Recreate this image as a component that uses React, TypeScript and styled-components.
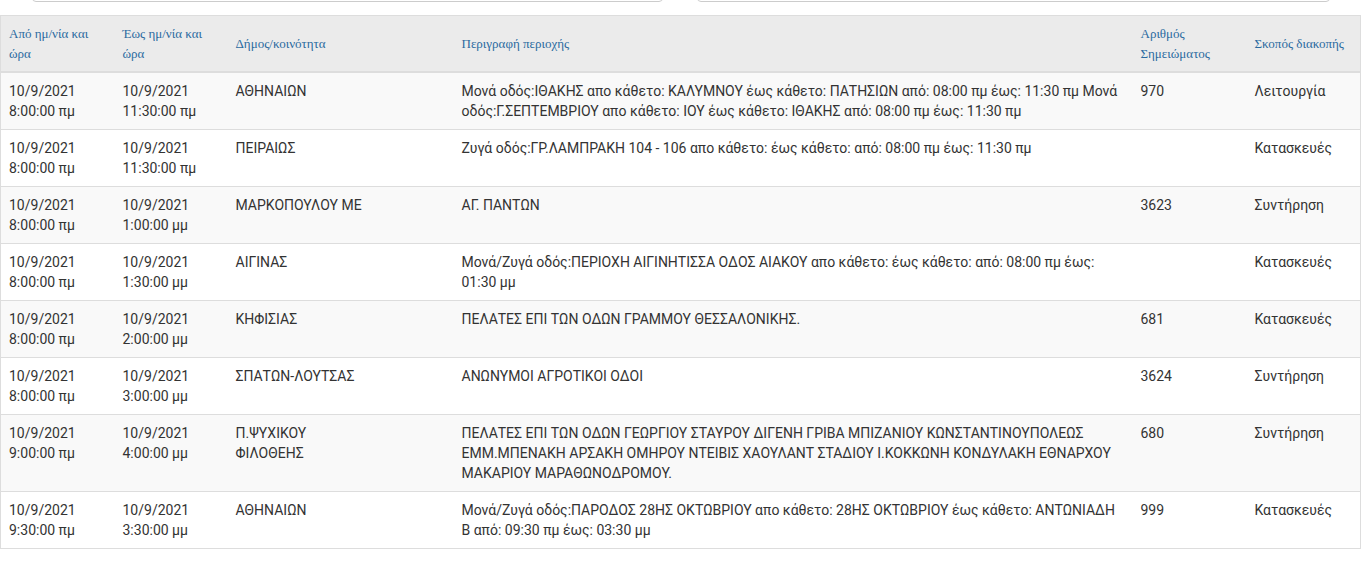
import styled, { createGlobalStyle } from "styled-components"

const GlobalStyle = createGlobalStyle`
    html, body {
        margin: 0;
        padding: 0;
        background: #fff;
    }
    body {
        font-family: Roboto, "Noto Sans", "Liberation Sans", sans-serif;
        font-size: 14px;
        color: #333;
    }
`

interface Outage {
    from: [string, string];
    to: [string, string];
    area: string;
    description: string;
    note: string;
    reason: string;
}

const outages: Outage[] = [
    {
        from: ["10/9/2021", "8:00:00 πμ"],
        to: ["10/9/2021", "11:30:00 πμ"],
        area: "ΑΘΗΝΑΙΩΝ",
        description: "Μονά οδός:ΙΘΑΚΗΣ απο κάθετο: ΚΑΛΥΜΝΟΥ έως κάθετο: ΠΑΤΗΣΙΩΝ από: 08:00 πμ έως: 11:30 πμ Μονά οδός:Γ.ΣΕΠΤΕΜΒΡΙΟΥ απο κάθετο: ΙΟΥ έως κάθετο: ΙΘΑΚΗΣ από: 08:00 πμ έως: 11:30 πμ",
        note: "970",
        reason: "Λειτουργία",
    },
    {
        from: ["10/9/2021", "8:00:00 πμ"],
        to: ["10/9/2021", "11:30:00 πμ"],
        area: "ΠΕΙΡΑΙΩΣ",
        description: "Ζυγά οδός:ΓΡ.ΛΑΜΠΡΑΚΗ 104 - 106 απο κάθετο: έως κάθετο: από: 08:00 πμ έως: 11:30 πμ",
        note: "",
        reason: "Κατασκευές",
    },
    {
        from: ["10/9/2021", "8:00:00 πμ"],
        to: ["10/9/2021", "1:00:00 μμ"],
        area: "ΜΑΡΚΟΠΟΥΛΟΥ ΜΕ",
        description: "ΑΓ. ΠΑΝΤΩΝ",
        note: "3623",
        reason: "Συντήρηση",
    },
    {
        from: ["10/9/2021", "8:00:00 πμ"],
        to: ["10/9/2021", "1:30:00 μμ"],
        area: "ΑΙΓΙΝΑΣ",
        description: "Μονά/Ζυγά οδός:ΠΕΡΙΟΧΗ ΑΙΓΙΝΗΤΙΣΣΑ ΟΔΟΣ ΑΙΑΚΟΥ απο κάθετο: έως κάθετο: από: 08:00 πμ έως:\n01:30 μμ",
        note: "",
        reason: "Κατασκευές",
    },
    {
        from: ["10/9/2021", "8:00:00 πμ"],
        to: ["10/9/2021", "2:00:00 μμ"],
        area: "ΚΗΦΙΣΙΑΣ",
        description: "ΠΕΛΑΤΕΣ ΕΠΙ ΤΩΝ ΟΔΩΝ ΓΡΑΜΜΟΥ ΘΕΣΣΑΛΟΝΙΚΗΣ.",
        note: "681",
        reason: "Κατασκευές",
    },
    {
        from: ["10/9/2021", "8:00:00 πμ"],
        to: ["10/9/2021", "3:00:00 μμ"],
        area: "ΣΠΑΤΩΝ-ΛΟΥΤΣΑΣ",
        description: "ΑΝΩΝΥΜΟΙ ΑΓΡΟΤΙΚΟΙ ΟΔΟΙ",
        note: "3624",
        reason: "Συντήρηση",
    },
    {
        from: ["10/9/2021", "9:00:00 πμ"],
        to: ["10/9/2021", "4:00:00 μμ"],
        area: "Π.ΨΥΧΙΚΟΥ\nΦΙΛΟΘΕΗΣ",
        description: "ΠΕΛΑΤΕΣ ΕΠΙ ΤΩΝ ΟΔΩΝ ΓΕΩΡΓΙΟΥ ΣΤΑΥΡΟΥ ΔΙΓΕΝΗ ΓΡΙΒΑ ΜΠΙΖΑΝΙΟΥ ΚΩΝΣΤΑΝΤΙΝΟΥΠΟΛΕΩΣ\nΕΜΜ.ΜΠΕΝΑΚΗ ΑΡΣΑΚΗ ΟΜΗΡΟΥ ΝΤΕΙΒΙΣ ΧΑΟΥΛΑΝΤ ΣΤΑΔΙΟΥ Ι.ΚΟΚΚΩΝΗ ΚΟΝΔΥΛΑΚΗ ΕΘΝΑΡΧΟΥ\nΜΑΚΑΡΙΟΥ ΜΑΡΑΘΩΝΟΔΡΟΜΟΥ.",
        note: "680",
        reason: "Συντήρηση",
    },
    {
        from: ["10/9/2021", "9:30:00 πμ"],
        to: ["10/9/2021", "3:30:00 μμ"],
        area: "ΑΘΗΝΑΙΩΝ",
        description: "Μονά/Ζυγά οδός:ΠΑΡΟΔΟΣ 28ΗΣ ΟΚΤΩΒΡΙΟΥ απο κάθετο: 28ΗΣ ΟΚΤΩΒΡΙΟΥ έως κάθετο: ΑΝΤΩΝΙΑΔΗ\nΒ από: 09:30 πμ έως: 03:30 μμ",
        note: "999",
        reason: "Κατασκευές",
    },
]

const columns = [
    { title: "Από ημ/νία και ώρα", width: 114 },
    { title: "Έως ημ/νία και ώρα", width: 113 },
    { title: "Δήμος/κοινότητα", width: 226 },
    { title: "Περιγραφή περιοχής", width: 679 },
    { title: "Αριθμός Σημειώματος", width: 114 },
    { title: "Σκοπός διακοπής", width: 114 },
]

export default function App() {
    return (
        <>
            <GlobalStyle />
            <Page>
                <FilterBar>
                    <SearchInput $width={631} />
                    <SearchInput $width={633} />
                </FilterBar>
                <Table>
                    <colgroup>
                        {columns.map((col) => (
                            <col key={col.title} style={{ width: col.width }} />
                        ))}
                    </colgroup>
                    <thead>
                        <tr>
                            {columns.map((col) => (
                                <HeadCell key={col.title}>{col.title}</HeadCell>
                            ))}
                        </tr>
                    </thead>
                    <tbody>
                        {outages.map((row, i) => (
                            <Row key={i} $striped={i % 2 === 0}>
                                <Cell>{row.from[0]}<br />{row.from[1]}</Cell>
                                <Cell>{row.to[0]}<br />{row.to[1]}</Cell>
                                <Cell>{row.area}</Cell>
                                <Cell>{row.description}</Cell>
                                <Cell>{row.note}</Cell>
                                <Cell>{row.reason}</Cell>
                            </Row>
                        ))}
                    </tbody>
                </Table>
            </Page>
        </>
    )
}

const Page = styled.div`
    width: 1362px;
    overflow: hidden;
`

const FilterBar = styled.div`
    display: flex;
    gap: 34px;
    padding-left: 32px;
    height: 2px;
    align-items: flex-end;
    margin-bottom: 13px;
`

const SearchInput = styled.div<{ $width: number }>`
    flex: none;
    width: ${(p) => p.$width}px;
    height: 34px;
    box-sizing: border-box;
    border: 1px solid #ccc;
    border-radius: 4px;
    background: #fff;
`

const Table = styled.table`
    width: 1361px;
    table-layout: fixed;
    border-collapse: collapse;
    border: 1px solid #ddd;
`

const HeadCell = styled.th`
    background: #ebebeb;
    font-family: "Liberation Serif", "DejaVu Serif", serif;
    font-size: 13px;
    font-weight: normal;
    color: #2a6aa0;
    text-align: left;
    vertical-align: middle;
    line-height: 20px;
    padding: 8px 8px 7px;
    height: 40px;
    border-bottom: 2px solid #ddd;
`

const Row = styled.tr<{ $striped: boolean }>`
    background: ${(p) => (p.$striped ? "#f9f9f9" : "#fff")};
`

const Cell = styled.td`
    padding: 8px;
    line-height: 20px;
    vertical-align: top;
    border-top: 1px solid #ddd;
    white-space: pre-line;
`
